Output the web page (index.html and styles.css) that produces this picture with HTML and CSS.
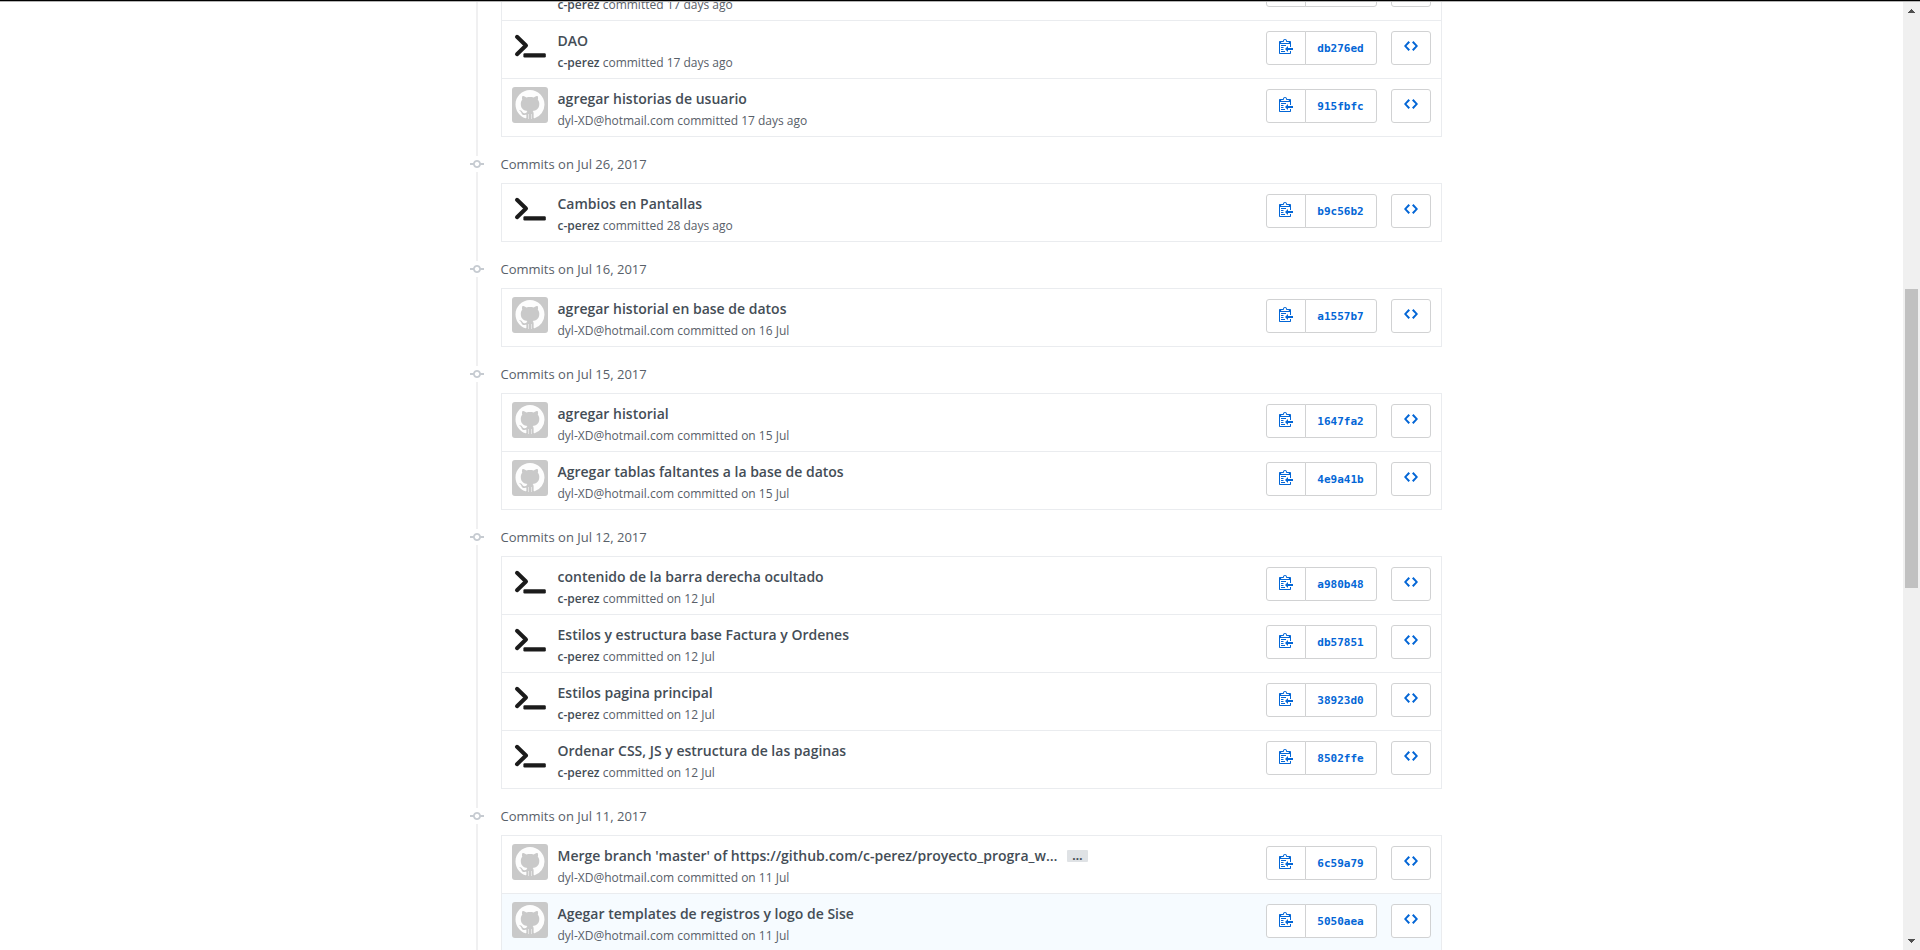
FILE: index.html
```
<!DOCTYPE html>
<html lang="en">
<head>
<meta charset="utf-8">
<title>Commits</title>
<link rel="stylesheet" href="styles.css">
</head>
<body>
<svg class="sprite" aria-hidden="true">
  <symbol id="git-commit" viewBox="0 0 14 16"><path d="M10.86 7c-.45-1.72-2-3-3.86-3-1.86 0-3.41 1.28-3.86 3H0v2h3.14c.45 1.72 2 3 3.86 3 1.86 0 3.41-1.28 3.86-3H14V7h-3.14zM7 10.2c-1.22 0-2.2-.98-2.2-2.2 0-1.22.98-2.2 2.2-2.2 1.22 0 2.2.98 2.2 2.2 0 1.22-.98 2.2-2.2 2.2z"/></symbol>
  <symbol id="clippy" viewBox="0 0 14 16"><path d="M2 13h4v1H2v-1zm5-6H2v1h5V7zm2 3V8l-3 3 3 3v-2h5v-2H9zM4.500 9H2v1h2.500V9zM2 12h2.500v-1H2v1zm9 1h1v2c-.02.28-.11.52-.3.7-.19.18-.42.28-.7.3H1c-.55 0-1-.45-1-1V4c0-.55.45-1 1-1h3c0-1.110.890-2 2-2 1.110 0 2 .890 2 2h3c.55 0 1 .45 1 1v5h-1V6H1v9h10v-2zM2 5h8c0-.55-.45-1-1-1H8c-.55 0-1-.45-1-1s-.45-1-1-1-1 .45-1 1-.45 1-1 1H3c-.55 0-1 .45-1 1z"/></symbol>
  <symbol id="code" viewBox="0 0 14 16"><path d="M9.500 3L8 4.500 11.500 8 8 11.500 9.500 13 14 8 9.500 3zm-5 0L0 8l4.500 5L6 11.500 2.500 8 6 4.500 4.500 3z"/></symbol>
  <symbol id="prompt" viewBox="0 0 36 36"><path d="M5 7.800l9 8.700-9 8.700" fill="none" stroke="#1b1b1b" stroke-width="4" stroke-linecap="round" stroke-linejoin="round"/><rect x="11.400" y="24.300" width="22.400" height="4.200" rx="1.200" fill="#1b1b1b"/></symbol>
  <symbol id="octocat" viewBox="0 0 36 36"><rect width="36" height="36" rx="3" fill="#c9c9c9"/><path fill="#fdfdfd" transform="translate(3.500 3) scale(1.812)" d="M8 0C3.580 0 0 3.580 0 8c0 3.540 2.290 6.530 5.470 7.590.4.070.55-.17.55-.38 0-.19-.01-.82-.01-1.490-2.010.37-2.530-.49-2.690-.94-.09-.23-.48-.94-.82-1.130-.28-.15-.68-.52-.01-.53.63-.01 1.080.58 1.230.82.72 1.210 1.870.87 2.330.66.070-.52.28-.87.51-1.070-1.780-.2-3.640-.89-3.640-3.950 0-.87.31-1.590.82-2.150-.08-.2-.36-1.020.08-2.120 0 0 .67-.21 2.200.82.64-.18 1.320-.27 2-.27.68 0 1.360.09 2 .27 1.530-1.040 2.200-.82 2.200-.82.44 1.100.16 1.920.08 2.120.51.56.82 1.270.82 2.150 0 3.070-1.870 3.750-3.650 3.950.29.25.54.73.54 1.480 0 1.070-.01 1.930-.01 2.200 0 .21.15.46.55.38A8.013 8.013 0 0 0 16 8c0-4.420-3.580-8-8-8z"/><path d="M16.500 27v5M19.500 27v5" stroke="#e4e4e4" stroke-width="1"/></symbol>
</svg>
<div class="frame">
  <main class="viewport">
    <div class="container">
      <div class="timeline">
        <ol class="commits first">
          <li class="commit">
            <svg class="avatar"><use href="#prompt"/></svg>
            <div class="info"><p class="title"></p><p class="meta"><a class="author" href="#">c-perez</a> committed 17 days ago</p></div>
            <div class="links"><div class="group"><button class="btn copy" aria-label="Copy the full SHA"></button><a class="btn sha" href="#" aria-label="Commit details"></a></div><a class="btn browse" href="#" aria-label="Browse files"></a></div>
          </li>
          <li class="commit">
            <svg class="avatar"><use href="#prompt"/></svg>
            <div class="info"><a class="title" href="#">DAO</a><p class="meta"><a class="author" href="#">c-perez</a> committed 17 days ago</p></div>
            <div class="links"><div class="group"><button class="btn copy" aria-label="Copy the full SHA"><svg class="icon"><use href="#clippy"/></svg></button><a class="btn sha" href="#">db276ed</a></div><a class="btn browse" href="#" aria-label="Browse files"><svg class="icon"><use href="#code"/></svg></a></div>
          </li>
          <li class="commit">
            <svg class="avatar"><use href="#octocat"/></svg>
            <div class="info"><a class="title" href="#">agregar historias de usuario</a><p class="meta">dyl-XD@hotmail.com committed 17 days ago</p></div>
            <div class="links"><div class="group"><button class="btn copy" aria-label="Copy the full SHA"><svg class="icon"><use href="#clippy"/></svg></button><a class="btn sha" href="#">915fbfc</a></div><a class="btn browse" href="#" aria-label="Browse files"><svg class="icon"><use href="#code"/></svg></a></div>
          </li>
        </ol>
        <h2 class="day"><span class="dot"><svg class="icon"><use href="#git-commit"/></svg></span>Commits on Jul 26, 2017</h2>
        <ol class="commits">
          <li class="commit">
            <svg class="avatar"><use href="#prompt"/></svg>
            <div class="info"><a class="title" href="#">Cambios en Pantallas</a><p class="meta"><a class="author" href="#">c-perez</a> committed 28 days ago</p></div>
            <div class="links"><div class="group"><button class="btn copy" aria-label="Copy the full SHA"><svg class="icon"><use href="#clippy"/></svg></button><a class="btn sha" href="#">b9c56b2</a></div><a class="btn browse" href="#" aria-label="Browse files"><svg class="icon"><use href="#code"/></svg></a></div>
          </li>
        </ol>
        <h2 class="day"><span class="dot"><svg class="icon"><use href="#git-commit"/></svg></span>Commits on Jul 16, 2017</h2>
        <ol class="commits">
          <li class="commit">
            <svg class="avatar"><use href="#octocat"/></svg>
            <div class="info"><a class="title" href="#">agregar historial en base de datos</a><p class="meta">dyl-XD@hotmail.com committed on 16 Jul</p></div>
            <div class="links"><div class="group"><button class="btn copy" aria-label="Copy the full SHA"><svg class="icon"><use href="#clippy"/></svg></button><a class="btn sha" href="#">a1557b7</a></div><a class="btn browse" href="#" aria-label="Browse files"><svg class="icon"><use href="#code"/></svg></a></div>
          </li>
        </ol>
        <h2 class="day"><span class="dot"><svg class="icon"><use href="#git-commit"/></svg></span>Commits on Jul 15, 2017</h2>
        <ol class="commits">
          <li class="commit">
            <svg class="avatar"><use href="#octocat"/></svg>
            <div class="info"><a class="title" href="#">agregar historial</a><p class="meta">dyl-XD@hotmail.com committed on 15 Jul</p></div>
            <div class="links"><div class="group"><button class="btn copy" aria-label="Copy the full SHA"><svg class="icon"><use href="#clippy"/></svg></button><a class="btn sha" href="#">1647fa2</a></div><a class="btn browse" href="#" aria-label="Browse files"><svg class="icon"><use href="#code"/></svg></a></div>
          </li>
          <li class="commit">
            <svg class="avatar"><use href="#octocat"/></svg>
            <div class="info"><a class="title" href="#">Agregar tablas faltantes a la base de datos</a><p class="meta">dyl-XD@hotmail.com committed on 15 Jul</p></div>
            <div class="links"><div class="group"><button class="btn copy" aria-label="Copy the full SHA"><svg class="icon"><use href="#clippy"/></svg></button><a class="btn sha" href="#">4e9a41b</a></div><a class="btn browse" href="#" aria-label="Browse files"><svg class="icon"><use href="#code"/></svg></a></div>
          </li>
        </ol>
        <h2 class="day"><span class="dot"><svg class="icon"><use href="#git-commit"/></svg></span>Commits on Jul 12, 2017</h2>
        <ol class="commits">
          <li class="commit">
            <svg class="avatar"><use href="#prompt"/></svg>
            <div class="info"><a class="title" href="#">contenido de la barra derecha ocultado</a><p class="meta"><a class="author" href="#">c-perez</a> committed on 12 Jul</p></div>
            <div class="links"><div class="group"><button class="btn copy" aria-label="Copy the full SHA"><svg class="icon"><use href="#clippy"/></svg></button><a class="btn sha" href="#">a980b48</a></div><a class="btn browse" href="#" aria-label="Browse files"><svg class="icon"><use href="#code"/></svg></a></div>
          </li>
          <li class="commit">
            <svg class="avatar"><use href="#prompt"/></svg>
            <div class="info"><a class="title" href="#">Estilos y estructura base Factura y Ordenes</a><p class="meta"><a class="author" href="#">c-perez</a> committed on 12 Jul</p></div>
            <div class="links"><div class="group"><button class="btn copy" aria-label="Copy the full SHA"><svg class="icon"><use href="#clippy"/></svg></button><a class="btn sha" href="#">db57851</a></div><a class="btn browse" href="#" aria-label="Browse files"><svg class="icon"><use href="#code"/></svg></a></div>
          </li>
          <li class="commit">
            <svg class="avatar"><use href="#prompt"/></svg>
            <div class="info"><a class="title" href="#">Estilos pagina principal</a><p class="meta"><a class="author" href="#">c-perez</a> committed on 12 Jul</p></div>
            <div class="links"><div class="group"><button class="btn copy" aria-label="Copy the full SHA"><svg class="icon"><use href="#clippy"/></svg></button><a class="btn sha" href="#">38923d0</a></div><a class="btn browse" href="#" aria-label="Browse files"><svg class="icon"><use href="#code"/></svg></a></div>
          </li>
          <li class="commit">
            <svg class="avatar"><use href="#prompt"/></svg>
            <div class="info"><a class="title" href="#">Ordenar CSS, JS y estructura de las paginas</a><p class="meta"><a class="author" href="#">c-perez</a> committed on 12 Jul</p></div>
            <div class="links"><div class="group"><button class="btn copy" aria-label="Copy the full SHA"><svg class="icon"><use href="#clippy"/></svg></button><a class="btn sha" href="#">8502ffe</a></div><a class="btn browse" href="#" aria-label="Browse files"><svg class="icon"><use href="#code"/></svg></a></div>
          </li>
        </ol>
        <h2 class="day"><span class="dot"><svg class="icon"><use href="#git-commit"/></svg></span>Commits on Jul 11, 2017</h2>
        <ol class="commits">
          <li class="commit">
            <svg class="avatar"><use href="#octocat"/></svg>
            <div class="info"><div class="title-row"><a class="title" href="#">Merge branch 'master' of https://github.com/c-perez/proyecto_progra_w…</a><button class="expander" aria-label="Show full message">…</button></div><p class="meta">dyl-XD@hotmail.com committed on 11 Jul</p></div>
            <div class="links"><div class="group"><button class="btn copy" aria-label="Copy the full SHA"><svg class="icon"><use href="#clippy"/></svg></button><a class="btn sha" href="#">6c59a79</a></div><a class="btn browse" href="#" aria-label="Browse files"><svg class="icon"><use href="#code"/></svg></a></div>
          </li>
          <li class="commit focused">
            <svg class="avatar"><use href="#octocat"/></svg>
            <div class="info"><a class="title" href="#">Agegar templates de registros y logo de Sise</a><p class="meta">dyl-XD@hotmail.com committed on 11 Jul</p></div>
            <div class="links"><div class="group"><button class="btn copy" aria-label="Copy the full SHA"><svg class="icon"><use href="#clippy"/></svg></button><a class="btn sha" href="#">5050aea</a></div><a class="btn browse" href="#" aria-label="Browse files"><svg class="icon"><use href="#code"/></svg></a></div>
          </li>
        </ol>
      </div>
    </div>
  </main>
  <div class="scrollbar" aria-hidden="true">
    <svg class="arrow" viewBox="0 0 17 17"><path d="M5 11V10H6V9H7V8H8V7H9V8H10V9H11V10H12V11z"/></svg>
    <div class="track"><div class="thumb"></div></div>
    <svg class="arrow" viewBox="0 0 17 17"><path d="M5 6V7H6V8H7V9H8V10H9V9H10V8H11V7H12V6z"/></svg>
  </div>
</div>
</body>
</html>
```
FILE: styles.css
```
* { box-sizing: border-box; }

body {
  margin: 0;
  background: #fff;
  color: #586069;
  font-family: "Open Sans", "Noto Sans", sans-serif;
  font-size: 13px;
}

a { color: inherit; text-decoration: none; }

.sprite { display: none; }

.frame {
  display: flex;
  height: 100vh;
  overflow: hidden;
  border-top: 1px solid #000;
}

.viewport {
  flex: 1;
  min-width: 0;
  overflow: hidden;
  border-top: 1px solid #b4b4b4;
}

.container {
  max-width: 980px;
  margin: 0 auto;
  padding: 0 0 0 14px;
}

.timeline {
  border-left: 2px solid #f0f0f1;
  padding-left: 23px;
}

.commits {
  list-style: none;
  margin: 0;
  padding: 0;
  border: 1px solid #eaecef;
}

/* the history is scrolled part of the way down */
.first { margin-top: -40px; }

.commit {
  display: flex;
  align-items: flex-start;
  height: 57px;
  padding: 8px 10px;
}

.commit + .commit {
  height: 58px;
  border-top: 1px solid #eaecef;
}

.focused { background: #f6fbff; }

.avatar {
  flex: none;
  width: 36px;
  height: 36px;
  margin-right: 10px;
}

.info { flex: 1; min-width: 0; }

.title-row {
  display: flex;
  align-items: center;
  gap: 10px;
}

.title {
  display: block;
  min-height: 23px;
  margin: 0;
  color: #444d56;
  font-size: 14px;
  font-weight: 600;
  line-height: 23px;
}

.expander {
  height: 12px;
  padding: 0 5px;
  border: 0;
  border-radius: 1px;
  background: #dfe2e5;
  color: #444d56;
  font: bold 12px/6px "Open Sans", sans-serif;
}

.meta {
  margin: 0;
  font-size: 12px;
  line-height: 21px;
}

.author { color: #444d56; font-weight: 600; }

.links {
  display: flex;
  gap: 14px;
  padding-top: 2px;
}

.group { display: flex; }

.btn {
  display: flex;
  align-items: center;
  justify-content: center;
  height: 34px;
  border: 1px solid #d1d2d3;
  border-radius: 3px;
  background: #fff;
  color: #0366d6;
}

.copy {
  width: 40px;
  padding: 0 0 4px;
  border-radius: 3px 0 0 3px;
}

.sha {
  width: 72px;
  margin-left: -1px;
  border-radius: 0 3px 3px 0;
  font: bold 11px "DejaVu Sans Mono", monospace;
}

.browse { width: 40px; padding-bottom: 4px; }

.icon {
  display: block;
  width: 14px;
  height: 16px;
  fill: currentColor;
}

.day {
  display: flex;
  align-items: center;
  height: 46px;
  margin: 0;
  padding-top: 7px;
  font-size: 13px;
  font-weight: 400;
}

.dot {
  margin: 0 17px 0 -31px;
  background: #fff;
  color: #c6cbd1;
}

.scrollbar {
  display: flex;
  flex: none;
  flex-direction: column;
  width: 17px;
  border-top: 1px solid #b4b4b4;
  background: #f0f0f0;
}

.arrow {
  flex: none;
  width: 17px;
  height: 17px;
  fill: #505050;
}

.track {
  display: flex;
  flex: 1;
  flex-direction: column;
  padding: 0 2px;
}

.track::before { content: ""; flex: 270; }
.thumb { flex: 299; background: #c1c1c1; }
.track::after { content: ""; flex: 345; }
```
